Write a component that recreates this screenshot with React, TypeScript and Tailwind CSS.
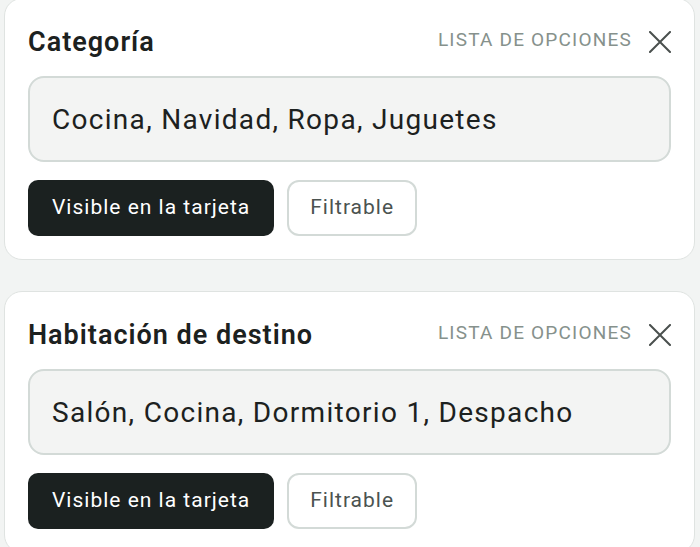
import React from "react";

function XIcon() {
  return (
    <svg width="22" height="22" viewBox="0 0 22 22" fill="none" className="shrink-0">
      <path d="M1 1 L21 21 M21 1 L1 21" stroke="#4a504e" strokeWidth="2" strokeLinecap="square" />
    </svg>
  );
}

function Card({ title, value }: { title: string; value: string }) {
  return (
    <div className="bg-white border border-[#dfe3e1] rounded-[18px] pl-[23px] pr-[23px] pt-[27px] pb-[23px]">
      <div className="flex items-center justify-between h-8">
        <div className="text-[27px] leading-8 font-semibold tracking-[1px] text-[#1c2120]">{title}</div>
        <div className="flex items-center gap-[17px]">
          <span className="text-[19px] leading-6 tracking-[1.2px] text-[#86918c] -mt-[4px]">LISTA DE OPCIONES</span>
          <XIcon />
        </div>
      </div>
      <div className="mt-[18px] h-[86px] rounded-[16px] border-2 border-[#d3dad7] bg-[#f3f4f3] px-[22px] flex items-center">
        <span className="text-[28px] tracking-[1.3px] text-[#1c2120] mt-[2px]">{value}</span>
      </div>
      <div className="mt-[18px] flex gap-[13px]">
        <button className="h-14 px-[24px] rounded-[10px] bg-[#1b2120] text-white text-[21px] tracking-[1px]">
          Visible en la tarjeta
        </button>
        <button className="h-14 px-[21px] rounded-[12px] border-2 border-[#d3dad7] bg-white text-[#4b5350] text-[21px] tracking-[1px]">
          Filtrable
        </button>
      </div>
    </div>
  );
}

export default function App() {
  return (
    <div
      className="w-[700px] h-[547px] overflow-hidden bg-[#f2f4f3] pl-[4px] pr-[5px]"
      style={{ fontFamily: "Roboto, 'Noto Sans', sans-serif" }}
    >
      <div className="-mt-[2px] flex flex-col gap-[31px]">
        <Card title="Categoría" value="Cocina, Navidad, Ropa, Juguetes" />
        <Card title="Habitación de destino" value="Salón, Cocina, Dormitorio 1, Despacho" />
      </div>
    </div>
  );
}
